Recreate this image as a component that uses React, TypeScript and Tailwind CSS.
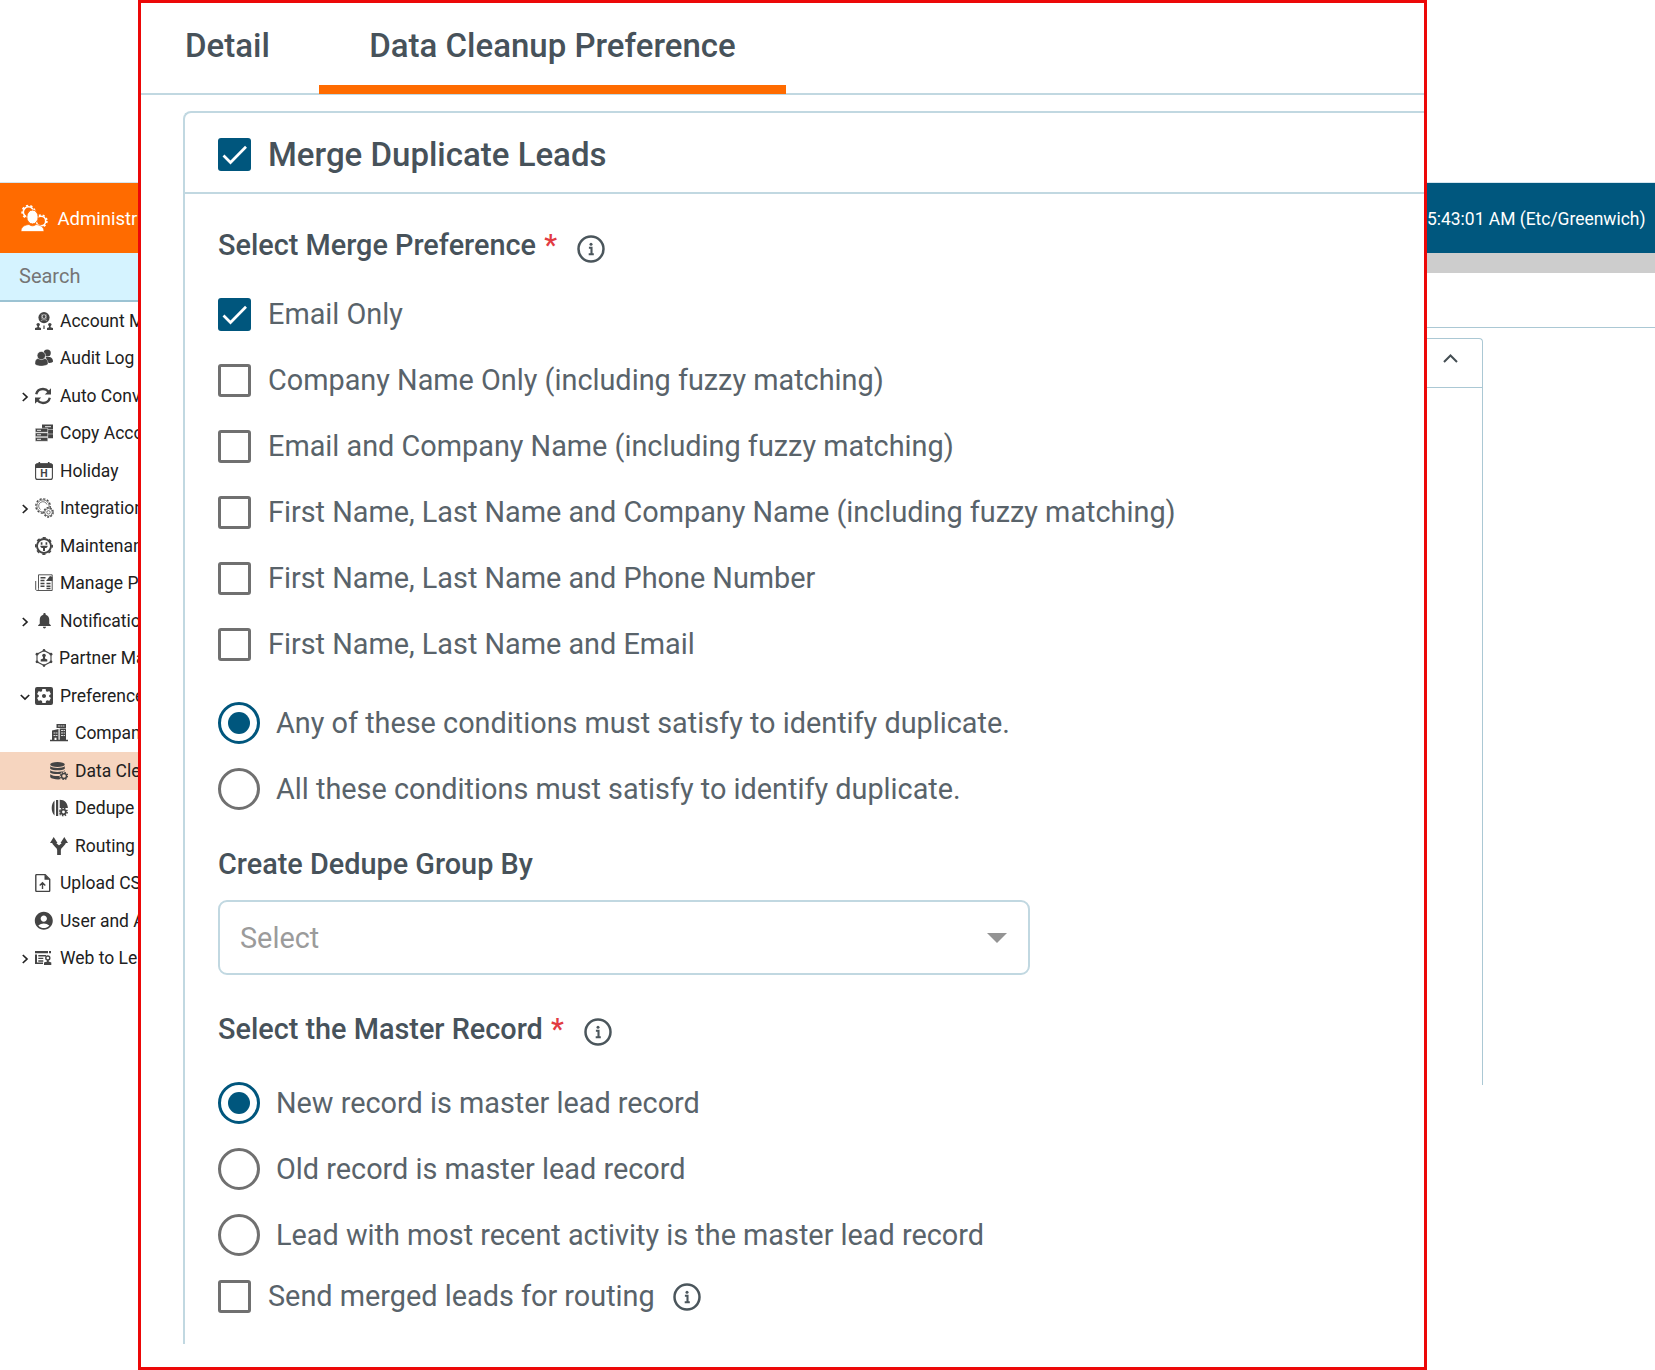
import type { ReactNode } from "react"
import { MdAccountCircle, MdNotifications, MdSettingsApplications } from "react-icons/md"

const teeth = (r: number, n: number) => `${(Math.PI * 2 * r) / n / 2}`

function Gear({ cx, cy, r, n = 8, w = 1.5 }: { cx: number; cy: number; r: number; n?: number; w?: number }) {
   return (
      <g fill="none" stroke="currentColor">
         <circle cx={cx} cy={cy} r={r - w} strokeWidth={w} />
         <circle cx={cx} cy={cy} r={r - w / 4} strokeWidth={w} strokeDasharray={teeth(r - w / 4, n)} />
      </g>
   )
}

function Icon({ children, size = 18 }: { children: ReactNode; size?: number }) {
   return (
      <svg width={size} height={size} viewBox={`0 0 ${size} ${size}`} fill="currentColor" className="shrink-0">
         {children}
      </svg>
   )
}

const icons = {
   account: (
      <Icon>
         <circle cx="9" cy="5.6" r="5.6" />
         <circle cx="9" cy="4.6" r="1.9" fill="none" stroke="#fff" strokeWidth="0.6" />
         <path d="M5.8 9.2c.6-2 5.8-2 6.4 0M7 2.2v5M11 2.2v5" fill="none" stroke="#fff" strokeWidth="0.5" />
         <circle cx="3.2" cy="12.6" r="1.7" />
         <path d="M2.4 13h1.6v2.3l2 .8V18H0v-1.9l2.4-.8z" />
         <circle cx="14.8" cy="12.6" r="1.7" />
         <path d="M14 13h1.6v2.3l2.4.8V18h-6v-1.9l2-.8zM8.4 13.5h1.2v3.5H8.4z" />
      </Icon>
   ),
   audit: (
      <Icon>
         <circle cx="12.2" cy="4" r="3.6" />
         <path d="M10.5 8h4.5c2 .6 3 2.3 3 4.8-1.3 1.2-3 1.2-4.5 1.2z" />
         <circle cx="6.3" cy="6.6" r="4.2" stroke="#fff" strokeWidth="0.6" />
         <path d="M0 14.5c0-3 1.2-4.5 3-5 2 1.5 5 1.5 6.800 0 2 .5 3.200 2 3.200 5 0 3-13 3.500-13 0z" stroke="#fff" strokeWidth="0.3" />
      </Icon>
   ),
   sync: (
      <Icon>
         <path d="M1.200 7.200C2 4 4.600 2 8 2c2.400 0 4 .9 5.400 2.500M14.800 10.800C14 14 11.400 16 8 16c-2.400 0-4-.9-5.400-2.500" fill="none" stroke="currentColor" strokeWidth="2.400" />
         <path d="M16 1.200v6.200H9.800zM0 16.800v-6.200h6.200z" />
      </Icon>
   ),
   copy: (
      <Icon>
         <path d="M7 .5h11v4.600H7zM13 5.600h5v4.200h-5zM13 10.300h5v4h-5z" />
         <path d="M.3 4.300h12.500v4H.3zM.3 8.800h12.500v4H.3zM.3 13.300h12.500v4H.3z" stroke="#fff" strokeWidth="0.5" />
         <path d="M2 6.300h4M2 10.800h4M2 15.300h4M10 2.700h6" stroke="#fff" strokeWidth="0.9" />
      </Icon>
   ),
   holiday: (
      <Icon>
         <rect x="0.6" y="1.8" width="16.8" height="15.6" rx="2" fill="none" stroke="currentColor" strokeWidth="1.1" />
         <path d="M.2 3.500a2 2 0 0 1 2-2h13.600a2 2 0 0 1 2 2v2.500H.2zM3.500 0h1.600v2H3.500zM12.900 0h1.600v2h-1.600z" />
         <text x="9" y="15.1" textAnchor="middle" fontSize="10.5" fontWeight="700" fontFamily="Roboto, sans-serif">
            H
         </text>
      </Icon>
   ),
   integration: (
      <Icon size={20}>
         <g fill="none" stroke="currentColor" strokeWidth="0.7">
            <circle cx="8" cy="8" r="7.2" strokeWidth="1.3" strokeDasharray="2.2 1.57" />
            <circle cx="8" cy="8" r="6.1" />
            <path d="M5.500 11.500A4.300 4.300 0 1 1 12 6.500" />
            <circle cx="13.5" cy="14.3" r="4.7" fill="#fff" strokeWidth="1.3" strokeDasharray="2 1.28" />
            <circle cx="13.5" cy="14.3" r="3.8" />
            <circle cx="13.5" cy="14.3" r="1.7" />
         </g>
      </Icon>
   ),
   maintenance: (
      <Icon>
         <circle cx="9" cy="9" r="7" fill="none" stroke="currentColor" strokeWidth="1.9" />
         <circle cx="9" cy="9" r="8.2" fill="none" stroke="currentColor" strokeWidth="1.6" strokeDasharray="3.22" strokeDashoffset="1.6" />
         <path d="M6.600 5.200v2.600M11.400 5.200v2.600" stroke="currentColor" strokeWidth="1.7" />
         <path d="M5.300 8.700h7.400c0 1.500-1.200 2.200-2.700 2.400V14H8v-2.900c-1.500-.2-2.700-.9-2.700-2.400z" />
      </Icon>
   ),
   manage: (
      <Icon>
         <g fill="none" stroke="currentColor" strokeWidth="0.9">
            <path d="M3.500.8h13.700v15.700H2.500c1-.5 1-1 1-2zM.7 7v8.500c0 .7.700 1 1.800 1" />
            <path d="M5.500 3.800h5M5.500 6.500h4M5.500 9.500h4M5.500 12.300h4M11.500 9.500h4M11.500 12.300h4M11.500 14.500h4" strokeWidth="1.6" />
         </g>
         <path d="M11 7l4-5 2.500 1v4z" />
      </Icon>
   ),
   bell: <MdNotifications size={19} className="-mx-[0.5px] shrink-0" />,
   partner: (
      <Icon>
         <path d="M9 1.500l7 3.700v7.600l-7 3.700-7-3.700V5.200z" fill="none" stroke="currentColor" strokeWidth="1.1" />
         <circle cx="9" cy="1.4" r="1.3" />
         <circle cx="9" cy="16.6" r="1.3" />
         <circle cx="2" cy="5.2" r="1.4" />
         <circle cx="16" cy="5.2" r="1.4" />
         <circle cx="2" cy="12.8" r="1.4" />
         <circle cx="16" cy="12.8" r="1.4" />
         <circle cx="9" cy="6.6" r="1.8" />
         <path d="M8 8h2v1.500l2.300 1v2H5.700v-2l2.300-1z" />
      </Icon>
   ),
   preference: <MdSettingsApplications size={24} className="-m-[3px] shrink-0" />,
   company: (
      <Icon>
         <path d="M0 15.800h18v1.400H0zM2 6.500L8.500 5v11H2zM6.500 0H16v4H6.500z" />
         <path d="M9.700 4.500H16V16H9.700z" />
         <path d="M3.500 9h4M3.500 11.500h4M8 2h6.500M11 6.500h4M11 9h4M11 11.500h4" stroke="#fff" strokeWidth="0.8" strokeDasharray="2 0.5" />
         <path d="M4.500 13.700h2V16h-2z" fill="#fff" />
      </Icon>
   ),
   data: (
      <Icon>
         <ellipse cx="7.5" cy="2.6" rx="7.3" ry="2.5" />
         <path d="M.2 4.300c2.500 2.200 12 2.200 14.600 0v2.400c-2.500 2.200-12 2.200-14.600 0zM.2 8.300c2.500 2.200 12 2.200 14.600 0v1c-2 .2-4 1.200-4.500 2.600-4 .4-8.600 0-10.100-1.200zM.2 12.300c2 1.600 6 2 9.400 1.700 0 1.200.3 2.200.9 3.300-4 .4-8.800-.3-10.300-2z" />
         <Gear cx={14} cy={14} r={3.9} n={8} w={1.4} />
      </Icon>
   ),
   dedupe: (
      <Icon>
         <path d="M4.500 1.500v15C2.700 15 1.700 12 1.700 9s1-6 2.800-7.500zM6 1h2.200v16H6zM9.700.8c5 0 8 3.500 8.200 8.200H9.700zM9.700 10h.8v6.500h-.8z" />
         <Gear cx={13.5} cy={13} r={4} n={8} w={1.7} />
      </Icon>
   ),
   routing: (
      <Icon>
         <path d="M3.700 4.500C3.700 9 9 8 9 13v5M14.300 4.500C14.300 9 9 8 9 13" fill="none" stroke="currentColor" strokeWidth="3.7" />
         <path d="M3.700 0l3.800 6H0zM14.300 0L18 6h-7.500z" />
      </Icon>
   ),
   upload: (
      <Icon>
         <path d="M.8 1.500a1 1 0 0 1 1-1H10l4.700 4.700v11.300a1 1 0 0 1-1 1H1.800a1 1 0 0 1-1-1zM7.500 15V9M4.700 11.500l2.800-2.800 2.800 2.800" fill="none" stroke="currentColor" strokeWidth="1.4" />
         <path d="M9.500.5v5.200h5z" />
      </Icon>
   ),
   user: <MdAccountCircle size={21.6} className="-m-[1.8px] shrink-0" />,
   web: (
      <Icon>
         <path d="M0 2h13v2.200H0zM14 2h2v2.200h-2zM0 5.500h2V14H0zM3.300 6H11v1.400H3.300zM3.300 8.700h5v1.400h-5zM3.300 11.300h5v1.400h-5zM0 13.500h8V15H0z" />
         <circle cx="12.8" cy="9" r="2" fill="none" stroke="currentColor" strokeWidth="1.4" />
         <path d="M12 11h1.700v1.500l2.600 1V16H9v-2.500l3-1z" />
      </Icon>
   ),
}

// labels run up to the edge of the overlay panel
const menu: { label: string; icon: keyof typeof icons; arrow?: "right" | "down"; sub?: boolean; active?: boolean }[] = [
   { label: "Account M", icon: "account" },
   { label: "Audit Log", icon: "audit" },
   { label: "Auto Conv", icon: "sync", arrow: "right" },
   { label: "Copy Acco", icon: "copy" },
   { label: "Holiday", icon: "holiday" },
   { label: "Integration", icon: "integration", arrow: "right" },
   { label: "Maintenan", icon: "maintenance" },
   { label: "Manage P", icon: "manage" },
   { label: "Notificatio", icon: "bell", arrow: "right" },
   { label: "Partner Ma", icon: "partner" },
   { label: "Preference", icon: "preference", arrow: "down" },
   { label: "Compan", icon: "company", sub: true },
   { label: "Data Cle", icon: "data", sub: true, active: true },
   { label: "Dedupe", icon: "dedupe", sub: true },
   { label: "Routing", icon: "routing", sub: true },
   { label: "Upload CS", icon: "upload" },
   { label: "User and A", icon: "user" },
   { label: "Web to Le", icon: "web", arrow: "right" },
]

function Arrow({ dir }: { dir?: "right" | "down" }) {
   return (
      <svg width="10" height="10" viewBox="0 0 10 10" fill="none" stroke="#222" strokeWidth="1.7" className="mt-0.5 shrink-0">
         {dir === "right" && <path d="M2.800 1L7 5 2.800 9" />}
         {dir === "down" && <path d="M.8 3L5 7l4.200-4" />}
      </svg>
   )
}

function Sidebar() {
   return (
      <aside className="mt-[182px] w-[138px] shrink-0 overflow-hidden border-t border-[#d5e5ee] whitespace-nowrap">
         <div className="flex h-[70px] items-center gap-[9.5px] bg-[#ff6b00] pl-5 text-white">
            <svg width="28" height="28" viewBox="0 0 28 28" fill="currentColor" className="shrink-0">
               <Gear cx={8.5} cy={8} r={6.8} n={9} w={1.6} />
               <Gear cx={21} cy={17} r={6.3} n={9} w={1.6} />
               <ellipse cx="12.5" cy="13" rx="5.7" ry="7" stroke="#ff6b00" strokeWidth="1" />
               <path d="M1 27.500c0-5 4-6.500 8-7 2 1.800 5 1.800 7 0 4 .5 8 2 8 7z" stroke="#ff6b00" strokeWidth="0.7" />
            </svg>
            <span className="pt-[3px] text-[18.5px]">Administr</span>
         </div>
         <div className="flex h-[49px] items-center border-b-2 border-[#9cc3d3] bg-[#d5f3ff] pb-0.5 pl-[19px] text-[20px] text-[#757575]">
            Search
         </div>
         {menu.map((m) => (
            <div
               key={m.label}
               className={`flex h-[37.5px] items-center text-[17.5px] text-[#212121] ${m.active ? "bg-[#f6d5bf]" : ""} ${m.sub ? "pl-[35px]" : "pl-5"}`}
            >
               <Arrow dir={m.arrow} />
               <span className="mr-[7px] ml-[5px] flex w-[18px] items-center text-[#444]">{icons[m.icon]}</span>
               <span className={m.icon === "partner" ? "-ml-px pt-[0.5px]" : "pt-[0.5px]"}>{m.label}</span>
            </div>
         ))}
      </aside>
   )
}

function Checkbox({ on }: { on?: boolean }) {
   if (!on) return <span className="mb-0.5 h-[33px] w-[33px] shrink-0 rounded-[3px] border-3 border-[#707070]" />
   return (
      <span className="mb-0.5 flex h-[33px] w-[33px] shrink-0 items-center justify-center rounded-[3px] bg-[#00567d]">
         <svg width="33" height="33" viewBox="0 0 33 33" fill="none" stroke="#fff" strokeWidth="2.7">
            <path d="M5.500 17.500l7 7L28 8.700" />
         </svg>
      </span>
   )
}

function Radio({ on }: { on?: boolean }) {
   return (
      <span
         className={`flex h-[42px] w-[42px] shrink-0 items-center justify-center rounded-full border-3 ${on ? "border-[#00567d]" : "border-[#707070]"}`}
      >
         {on && <span className="h-[22px] w-[22px] rounded-full bg-[#00567d]" />}
      </span>
   )
}

function Info() {
   return (
      <svg width="28" height="28" viewBox="0 0 28 28" fill="none" stroke="#4b565c" className="shrink-0">
         <circle cx="14" cy="14" r="12.5" strokeWidth="2.5" />
         <path d="M11.900 12.700h2.600v6.500M11.700 19.200h5.100" strokeWidth="2.100" />
         <circle cx="14" cy="9.3" r="1.5" fill="#4b565c" stroke="none" />
      </svg>
   )
}

function Option({ type, on, children }: { type: "check" | "radio"; on?: boolean; children: ReactNode }) {
   return (
      <div className={`flex h-[66px] items-center ${type === "check" ? "gap-[17px]" : "gap-4"}`}>
         {type === "check" ? <Checkbox on={on} /> : <Radio on={on} />}
         <span className={type === "radio" ? "pt-px" : ""}>{children}</span>
      </div>
   )
}

function Required({ children }: { children: ReactNode }) {
   return (
      <span className="font-medium text-[#47525a]">
         {children} <span className="ml-px text-[#e23b42]">*</span>
      </span>
   )
}

function Preferences() {
   return (
      <main className="flex h-[1370px] w-[1289px] shrink-0 flex-col border-3 border-[#ec0808] bg-white whitespace-nowrap text-[#59636a]">
         <div className="flex h-[92px] border-b-2 border-[#c1d8e1] text-[33px] font-medium text-[#47525a]">
            <div className="flex w-[178px] items-center pb-1 pl-[44px]">Detail</div>
            <div className="flex h-[91px] w-[467px] items-center justify-center border-b-9 border-[#ff6b00] pt-[3.5px]">
               Data Cleanup Preference
            </div>
         </div>
         <section className="mt-4 ml-[42px] h-[1233px] rounded-tl-[8px] border-t-2 border-l-2 border-[#c1d8e1] text-[28.83px]">
            <div className="flex h-[81px] items-center gap-[17px] border-b-2 border-[#c1d8e1] pt-[5px] pl-[33px] text-[33px] font-medium text-[#47525a]">
               <Checkbox on />
               Merge Duplicate Leads
            </div>
            <div className="pl-[33px]">
               <div className="flex h-[88px] items-center gap-5 pt-4">
                  <Required>Select Merge Preference</Required>
                  <span className="pt-[5px]">
                     <Info />
                  </span>
               </div>
               <Option type="check" on>Email Only</Option>
               <Option type="check">Company Name Only (including fuzzy matching)</Option>
               <Option type="check">Email and Company Name (including fuzzy matching)</Option>
               <Option type="check">First Name, Last Name and Company Name (including fuzzy matching)</Option>
               <Option type="check">First Name, Last Name and Phone Number</Option>
               <Option type="check">First Name, Last Name and Email</Option>
               <div className="mt-3">
                  <Option type="radio" on>Any of these conditions must satisfy to identify duplicate.</Option>
                  <Option type="radio">All these conditions must satisfy to identify duplicate.</Option>
               </div>
               <div className="flex h-[78px] items-center pt-[7px] font-medium text-[#47525a]">Create Dedupe Group By</div>
               <div className="flex h-[75px] w-[812px] items-center justify-between rounded-[9px] border-2 border-[#c1d8e1] pr-[21px] pl-5 text-[#9b9b9b]">
                  <span className="pt-0.5">Select</span>
                  <svg width="20" height="10" viewBox="0 0 20 10" fill="#949494">
                     <path d="M0 0h20L10 10z" />
                  </svg>
               </div>
               <div className="flex h-[95px] items-center gap-5 pt-3.5">
                  <Required>Select the Master Record</Required>
                  <span className="pt-[5px]">
                     <Info />
                  </span>
               </div>
               <Option type="radio" on>New record is master lead record</Option>
               <Option type="radio">Old record is master lead record</Option>
               <Option type="radio">Lead with most recent activity is the master lead record</Option>
               <div className="flex h-[58px] items-center gap-[17px]">
                  <Checkbox />
                  Send merged leads for routing
                  <span className="pl-px">
                     <Info />
                  </span>
               </div>
            </div>
         </section>
      </main>
   )
}

function Page() {
   return (
      <div className="mt-[182px] flex-1 overflow-hidden border-t border-[#d5e5ee] whitespace-nowrap">
         <div className="flex h-[70px] items-center bg-[#00577e] pt-[3px] text-[17.45px] text-white">5:43:01 AM (Etc/Greenwich)</div>
         <div className="h-5 bg-[#cdcdcd]" />
         <div className="h-[55px] border-b border-[#abc8d4]" />
         <div className="mt-[10px] h-[747px] w-14 rounded-tr-[4px] border-t border-r border-[#abc8d4]">
            <div className="flex h-[49px] justify-end border-b border-[#abc8d4] pt-[13px] pr-6">
               <svg width="15" height="14" viewBox="0 0 15 14" fill="none" stroke="#444e53" strokeWidth="2">
                  <path d="M1 10l6.500-6.500L14 10" />
               </svg>
            </div>
         </div>
      </div>
   )
}

export default function App() {
   return (
      <div className="flex h-[1370px] w-[1655px] items-start overflow-hidden bg-white font-[Roboto,sans-serif]">
         <Sidebar />
         <Preferences />
         <Page />
      </div>
   )
}
